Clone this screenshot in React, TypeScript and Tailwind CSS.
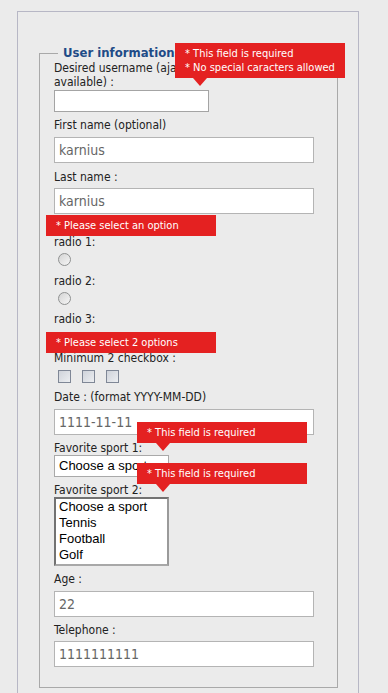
// Validation demo form: fieldset of fields with red error bubbles over them.

const labelCls = "block text-[12px] leading-[14px] text-[#222]";
const inputCls =
  "block h-[26px] w-[260px] border border-[#b4b4b4] bg-white px-[4px] text-[14px] text-[#666] outline-none";

function Bubble({
  className,
  lines,
  arrow,
}: {
  className: string;
  lines: string[];
  arrow?: string;
}) {
  return (
    <div
      className={`absolute w-[170px] whitespace-nowrap bg-[#e42121] pl-[10px] text-[11px] text-white ${className}`}
    >
      {lines.map((l) => (
        <div key={l}>{l}</div>
      ))}
      {arrow && (
        <span
          aria-hidden
          className={`absolute top-full h-0 w-0 border-x-[7px] border-t-[8px] border-x-transparent border-t-[#e42121] ${arrow}`}
        />
      )}
    </div>
  );
}

function Radio() {
  return (
    <span className="ml-[4px] block h-[13px] w-[13px] rounded-full border border-[#8f9191] bg-gradient-to-br from-[#d4d4d4] to-[#f6f6f6]" />
  );
}

export default function App() {
  return (
    <div
      className="relative min-h-screen bg-[#ebebeb] pl-[17px] pt-[11px]"
      style={{ fontFamily: '"DejaVu Sans Condensed", "DejaVu Sans", sans-serif' }}
    >
      <div className="w-[342px] border border-b-0 border-[#b7b7c5] pb-[10px] pl-[21px] pt-[33px]">
        <fieldset className="w-[299px] border border-[#a9a9a9] px-[14px] pb-[20px]">
          <legend className="ml-[4px] px-[5px] text-[13px] font-bold leading-[16px] text-[#1f4b87]">
            User informations
          </legend>

          <label className={labelCls}>
            Desired username (ajax
            <br />
            available) :
          </label>
          <input className="mt-[1px] block h-[22px] w-[155px] border border-[#a4a4a4] bg-white outline-none" />

          <label className={`${labelCls} mt-[6px]`}>First name (optional)</label>
          <input className={`${inputCls} mt-[5px]`} defaultValue="karnius" />

          <label className={`${labelCls} mt-[7px]`}>Last name :</label>
          <input className={`${inputCls} mt-[4px]`} defaultValue="karnius" />

          {/* group label sits under the red bubble */}
          <div className="mt-[5px] h-[14px]" />
          <label className={`${labelCls} mt-[2px]`}>radio 1:</label>
          <div className="mt-[4px]">
            <Radio />
          </div>
          <label className={`${labelCls} mt-[8px]`}>radio 2:</label>
          <div className="mt-[4px]">
            <Radio />
          </div>
          <label className={`${labelCls} mt-[7px]`}>radio 3:</label>
          <div className="mt-[7px]">
            <Radio />
          </div>

          <label className={`${labelCls} mt-[5px]`}>Minimum 2 checkbox :</label>
          <div className="mt-[5px] flex gap-[11px] pl-[4px]">
            {[0, 1, 2].map((i) => (
              <span
                key={i}
                className="block h-[13px] w-[13px] border border-[#7f8796] bg-gradient-to-br from-[#cfd3da] to-[#eceef1]"
              />
            ))}
          </div>

          <label className={`${labelCls} mt-[7px]`}>Date : (format YYYY-MM-DD)</label>
          <input className={`${inputCls} mt-[5px]`} defaultValue="1111-11-11" />

          <label className={`${labelCls} mt-[6px]`}>Favorite sport 1:</label>
          <div
            className="flex h-[22px] w-[115px] items-center border border-[#a9a9a9] bg-white pl-[4px] text-[13px] text-black"
            style={{ fontFamily: '"Liberation Sans", Arial, sans-serif' }}
          >
            Choose a sport
          </div>

          <label className={`${labelCls} mt-[6px]`}>Favorite sport 2:</label>
          <div
            className="h-[69px] w-[115px] border-2 border-[#727272] border-b-[#a8a8a8] border-r-[#9a9a9a] bg-white pl-[3px] text-[13px] leading-[16px] text-black"
            style={{ fontFamily: '"Liberation Sans", Arial, sans-serif' }}
          >
            <div>Choose a sport</div>
            <div>Tennis</div>
            <div>Football</div>
            <div>Golf</div>
          </div>

          <label className={`${labelCls} mt-[6px]`}>Age :</label>
          <input className={`${inputCls} mt-[5px]`} defaultValue="22" />

          <label className={`${labelCls} mt-[6px]`}>Telephone :</label>
          <input className={`${inputCls} mt-[4px]`} defaultValue="1111111111" />
        </fieldset>
      </div>

      <Bubble
        className="left-[175px] top-[43px] h-[35px] pt-[4px] leading-[14px]"
        lines={["* This field is required", "* No special caracters allowed"]}
        arrow="left-[18px]"
      />
      <Bubble
        className="left-[46px] top-[215px] h-[21px] leading-[21px]"
        lines={["* Please select an option"]}
      />
      <Bubble
        className="left-[46px] top-[332px] h-[21px] leading-[21px]"
        lines={["* Please select 2 options"]}
      />
      <Bubble
        className="left-[137px] top-[422px] h-[21px] leading-[21px]"
        lines={["* This field is required"]}
        arrow="left-[19px]"
      />
      <Bubble
        className="left-[137px] top-[463px] h-[21px] leading-[21px]"
        lines={["* This field is required"]}
        arrow="left-[19px]"
      />
    </div>
  );
}
